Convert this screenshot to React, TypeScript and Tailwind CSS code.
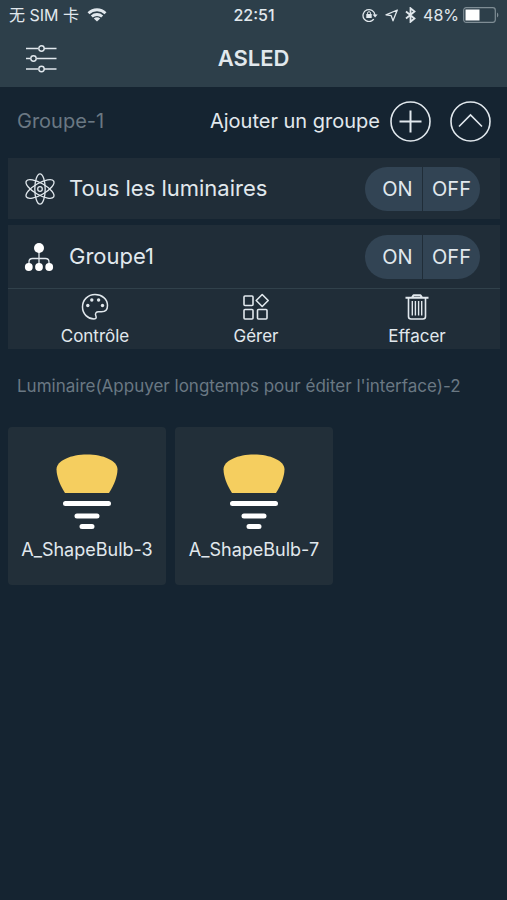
import { useState } from 'react';

interface Bulb {
    id: number;
    name: string;
}

interface GroupAction {
    id: number;
    name: string;
    icon: React.ReactNode;
}

function SlidersIcon() {
    return (
        <svg width="32" height="30" viewBox="0 0 32 30" fill="none" stroke="currentColor" strokeWidth="1.4">
            <path d="M1 4.500H13M19 4.500H31.500M1 14.500H5.500M11.500 14.500H31.500M1 25H13M19 25H31.500" />
            <circle cx="16.500" cy="4.500" r="2.700" />
            <circle cx="8.500" cy="14.500" r="2.700" />
            <circle cx="16.500" cy="25" r="2.700" />
        </svg>
    )
}

function WifiIcon() {
    return (
        <svg width="20" height="14" viewBox="0 0 20 14" fill="none" stroke="currentColor" strokeWidth="2.800">
            <path d="M1.500 5.200C6.300.6 13.700.6 18.500 5.200" />
            <path d="M4.800 8.600C7.800 5.800 12.200 5.800 15.200 8.600" />
            <path d="M10 13.600L6.800 10.500C8.700 8.900 11.300 8.900 13.200 10.500Z" fill="currentColor" stroke="none" />
        </svg>
    )
}

function LockIcon() {
    return (
        <svg width="16" height="14" viewBox="0 0 16 14" fill="none" stroke="currentColor" strokeWidth="1.300">
            <path d="M11.800 11.200A6 6 0 1 1 13 7" />
            <path d="M10.600 6.400H15.600L13.100 9.600Z" fill="currentColor" stroke="none" />
            <rect x="4.300" y="6" width="5.400" height="4" fill="currentColor" stroke="none" />
            <path d="M5.500 6.400V5.200A1.500 1.500 0 0 1 8.500 5.200V6.400" strokeWidth="1" />
        </svg>
    )
}

function LocationIcon() {
    return (
        <svg width="13" height="13" viewBox="0 0 13 13" fill="none" stroke="currentColor" strokeWidth="1.300" strokeLinejoin="round">
            <path d="M12.300 1L1 5.800L6.200 6.600L8 11.800Z" />
        </svg>
    )
}

function BluetoothIcon() {
    return (
        <svg width="11" height="16" viewBox="0 0 11 16" fill="none" stroke="currentColor" strokeWidth="1.800">
            <path d="M1 4.500L9.500 11.500L5.500 14.800V1.200L9.500 4.500L1 11.500" />
        </svg>
    )
}

function BatteryIcon() {
    return (
        <svg width="36" height="16" viewBox="0 0 36 16" fill="none">
            <rect x=".7" y=".7" width="31.600" height="14.600" rx="2.500" stroke="#7f8d95" strokeWidth="1.200" />
            <rect x="2.500" y="2.500" width="14" height="11" fill="#fff" />
            <path d="M34 5.500C35.800 6.500 35.800 9.500 34 10.500Z" fill="#7f8d95" />
        </svg>
    )
}

function AtomIcon() {
    return (
        <svg width="32" height="32" viewBox="0 0 32 32" fill="none" stroke="currentColor" strokeWidth="1.300">
            <ellipse cx="16" cy="16" rx="5.200" ry="15.200" />
            <ellipse cx="16" cy="16" rx="5.800" ry="15.800" transform="rotate(60 16 16)" />
            <ellipse cx="16" cy="16" rx="5.800" ry="15.800" transform="rotate(120 16 16)" />
            <circle cx="16" cy="16" r="2.300" />
        </svg>
    )
}

function TreeIcon() {
    return (
        <svg width="30" height="30" viewBox="0 0 30 30" fill="currentColor">
            <path d="M15 8V24M5 24V20Q5 16.500 8.500 16.500H21.500Q25 16.500 25 20V24" fill="none" stroke="currentColor" strokeWidth="1.300" />
            <g fill="#fff">
                <circle cx="15" cy="6" r="5" />
                <circle cx="4.800" cy="25" r="3.900" />
                <circle cx="15" cy="25" r="3.900" />
                <circle cx="25.200" cy="25" r="3.900" />
            </g>
        </svg>
    )
}

function PaletteIcon() {
    return (
        <svg width="28" height="28" viewBox="0 0 28 28" fill="none" stroke="currentColor" strokeWidth="1.500" strokeLinejoin="round">
            <path d="M14 1.500C6.800 1.500 1.500 7 1.500 14C1.500 21 7 26 13 26C15.500 26 15.500 24.500 14.800 22.800C13.800 20.300 15.200 18.800 17.500 18.800H20.500C24.500 18.800 26.500 16 26.500 12.500C26.500 6 21 1.500 14 1.500Z" />
            <g fill="currentColor" stroke="none">
                <circle cx="6.800" cy="12.500" r="1.700" />
                <circle cx="10.800" cy="7" r="1.700" />
                <circle cx="17.600" cy="7" r="1.700" />
                <circle cx="21.500" cy="12.500" r="1.700" />
            </g>
        </svg>
    )
}

function ShapesIcon() {
    return (
        <svg width="28" height="28" viewBox="0 0 28 28" fill="none" stroke="currentColor" strokeWidth="1.600" strokeLinejoin="round">
            <rect x="2" y="3" width="9" height="9.500" rx="1" />
            <rect x="2" y="16.500" width="9" height="9.500" rx="1" />
            <rect x="15.500" y="16.500" width="9.500" height="9.500" rx="1" />
            <path d="M20.200 1.500L26.200 7.500L20.200 13.500L14.200 7.500Z" />
        </svg>
    )
}

function TrashIcon() {
    return (
        <svg width="28" height="28" viewBox="0 0 28 28" fill="none" stroke="currentColor" strokeWidth="1.600" strokeLinejoin="round">
            <path d="M2.500 4.800H25.500M9 4.500L10.500 2.200H17.500L19 4.500" strokeWidth="2" />
            <path d="M5.500 5V23.500Q5.500 26 8 26H20Q22.500 26 22.500 23.500V5" />
            <path d="M9.300 8V22.500M12.400 8V22.500M15.600 8V22.500M18.700 8V22.500" strokeWidth="1.400" />
        </svg>
    )
}

function BulbIcon() {
    return (
        <svg width="62" height="76" viewBox="0 0 62 76">
            <path d="M9 39C4 31.500 .5 22 .5 15.500C.5 6.500 15 .5 31 .5S61.500 6.500 61.500 15.500C61.500 22 58 31.500 53 39Z" fill="#f5ce5f" />
            <path d="M9.500 49.500H52.500M21 62H41M26 72.500H36" stroke="#fff" strokeWidth="5" strokeLinecap="round" />
        </svg>
    )
}

function OnOffSwitch() {
    return (
        <div className="flex h-11 overflow-hidden rounded-full bg-[#324454] text-xl">
            <button className="w-[58px] border-r border-[#202d38] pl-2">ON</button>
            <button className="w-[57px]">OFF</button>
        </div>
    )
}

export default function App() {
    const [isOpen, setIsOpen] = useState(true);
    const actions: GroupAction[] = [
        { id: 1, name: 'Contrôle', icon: <PaletteIcon /> },
        { id: 2, name: 'Gérer', icon: <ShapesIcon /> },
        { id: 3, name: 'Effacer', icon: <TrashIcon /> }
    ]
    const bulbs: Bulb[] = [
        { id: 1, name: 'A_ShapeBulb-3' },
        { id: 2, name: 'A_ShapeBulb-7' }
    ]
    return (
        <div className="min-h-screen bg-[#152431] font-['Inter','Noto_Sans_CJK_SC',sans-serif] text-[#e1e8ed]">
            <header className="bg-[#2d3f4a]">
                <div className="grid h-[30px] grid-cols-[1fr_auto_1fr] items-center pr-2 pl-[9px] text-base">
                    <div className="flex items-center gap-2">
                        <span>无 SIM 卡</span>
                        <WifiIcon />
                    </div>
                    <span className="font-medium">22:51</span>
                    <div className="flex items-center justify-end gap-[7px]">
                        <LockIcon />
                        <LocationIcon />
                        <BluetoothIcon />
                        <div className="flex items-center gap-1">
                            <span>48%</span>
                            <BatteryIcon />
                        </div>
                    </div>
                </div>
                <div className="grid h-[57px] grid-cols-[1fr_auto_1fr] items-center px-[25px]">
                    <button aria-label="Menu" className="justify-self-start">
                        <SlidersIcon />
                    </button>
                    <h1 className="text-[22px] font-semibold">ASLED</h1>
                </div>
            </header>
            <main>
                <div className="flex h-[71px] items-center justify-between pr-4 pb-[3px] pl-[17px]">
                    <h2 className="text-xl text-[#6a7883]">Groupe-1</h2>
                    <div className="flex items-center gap-[19px]">
                        <button className="flex items-center gap-[10px] text-xl">
                            Ajouter un groupe
                            <svg width="41" height="41" viewBox="0 0 41 41" fill="none" stroke="currentColor" strokeWidth="1.600">
                                <circle cx="20.500" cy="20.500" r="19.500" />
                                <path d="M9.500 20.500H31.500M20.500 9.500V31.500" strokeWidth="2" />
                            </svg>
                        </button>
                        <button aria-label="Replier" onClick={() => setIsOpen(!isOpen)}>
                            <svg width="41" height="41" viewBox="0 0 41 41" fill="none" stroke="currentColor" strokeWidth="1.600">
                                <circle cx="20.500" cy="20.500" r="19.500" />
                                <path d="M9 25.500L20.500 14L32 25.500" />
                            </svg>
                        </button>
                    </div>
                </div>
                {isOpen && (
                    <div className="flex flex-col gap-[6px] pr-[7px] pl-2">
                        <section className="flex h-[61px] items-center justify-between bg-[#202d38] pr-5 pl-4">
                            <div className="flex items-center gap-[13px]">
                                <AtomIcon />
                                <h3 className="text-[22px]">Tous les luminaires</h3>
                            </div>
                            <OnOffSwitch />
                        </section>
                        <section className="bg-[#202d38]">
                            <div className="flex h-16 items-center justify-between border-b border-[#31414b] pr-5 pl-4">
                                <div className="flex items-center gap-[15px]">
                                    <TreeIcon />
                                    <h3 className="text-[22px]">Groupe1</h3>
                                </div>
                                <OnOffSwitch />
                            </div>
                            <div className="flex h-[60px] justify-between pr-[43px] pl-[47px]">
                                {actions.map((action) => (
                                    <button key={action.id} className="flex w-20 flex-col items-center gap-[3px] pt-1 text-[17px] leading-6">
                                        {action.icon}
                                        {action.name}
                                    </button>
                                ))}
                            </div>
                        </section>
                    </div>
                )}
                <h2 className="flex h-[78px] items-center px-[17px] pb-[3px] text-[17px] text-[#6a7883]">
                    Luminaire(Appuyer longtemps pour éditer l'interface)-2
                </h2>
                <div className="grid grid-cols-3 gap-[9px] pr-[7px] pl-2">
                    {bulbs.map((bulb) => (
                        <button key={bulb.id} className="flex aspect-square flex-col items-center gap-2 rounded-sm bg-[#222f39] pt-[27px] text-lg leading-6">
                            <BulbIcon />
                            {bulb.name}
                        </button>
                    ))}
                </div>
            </main>
        </div>
    )
}
